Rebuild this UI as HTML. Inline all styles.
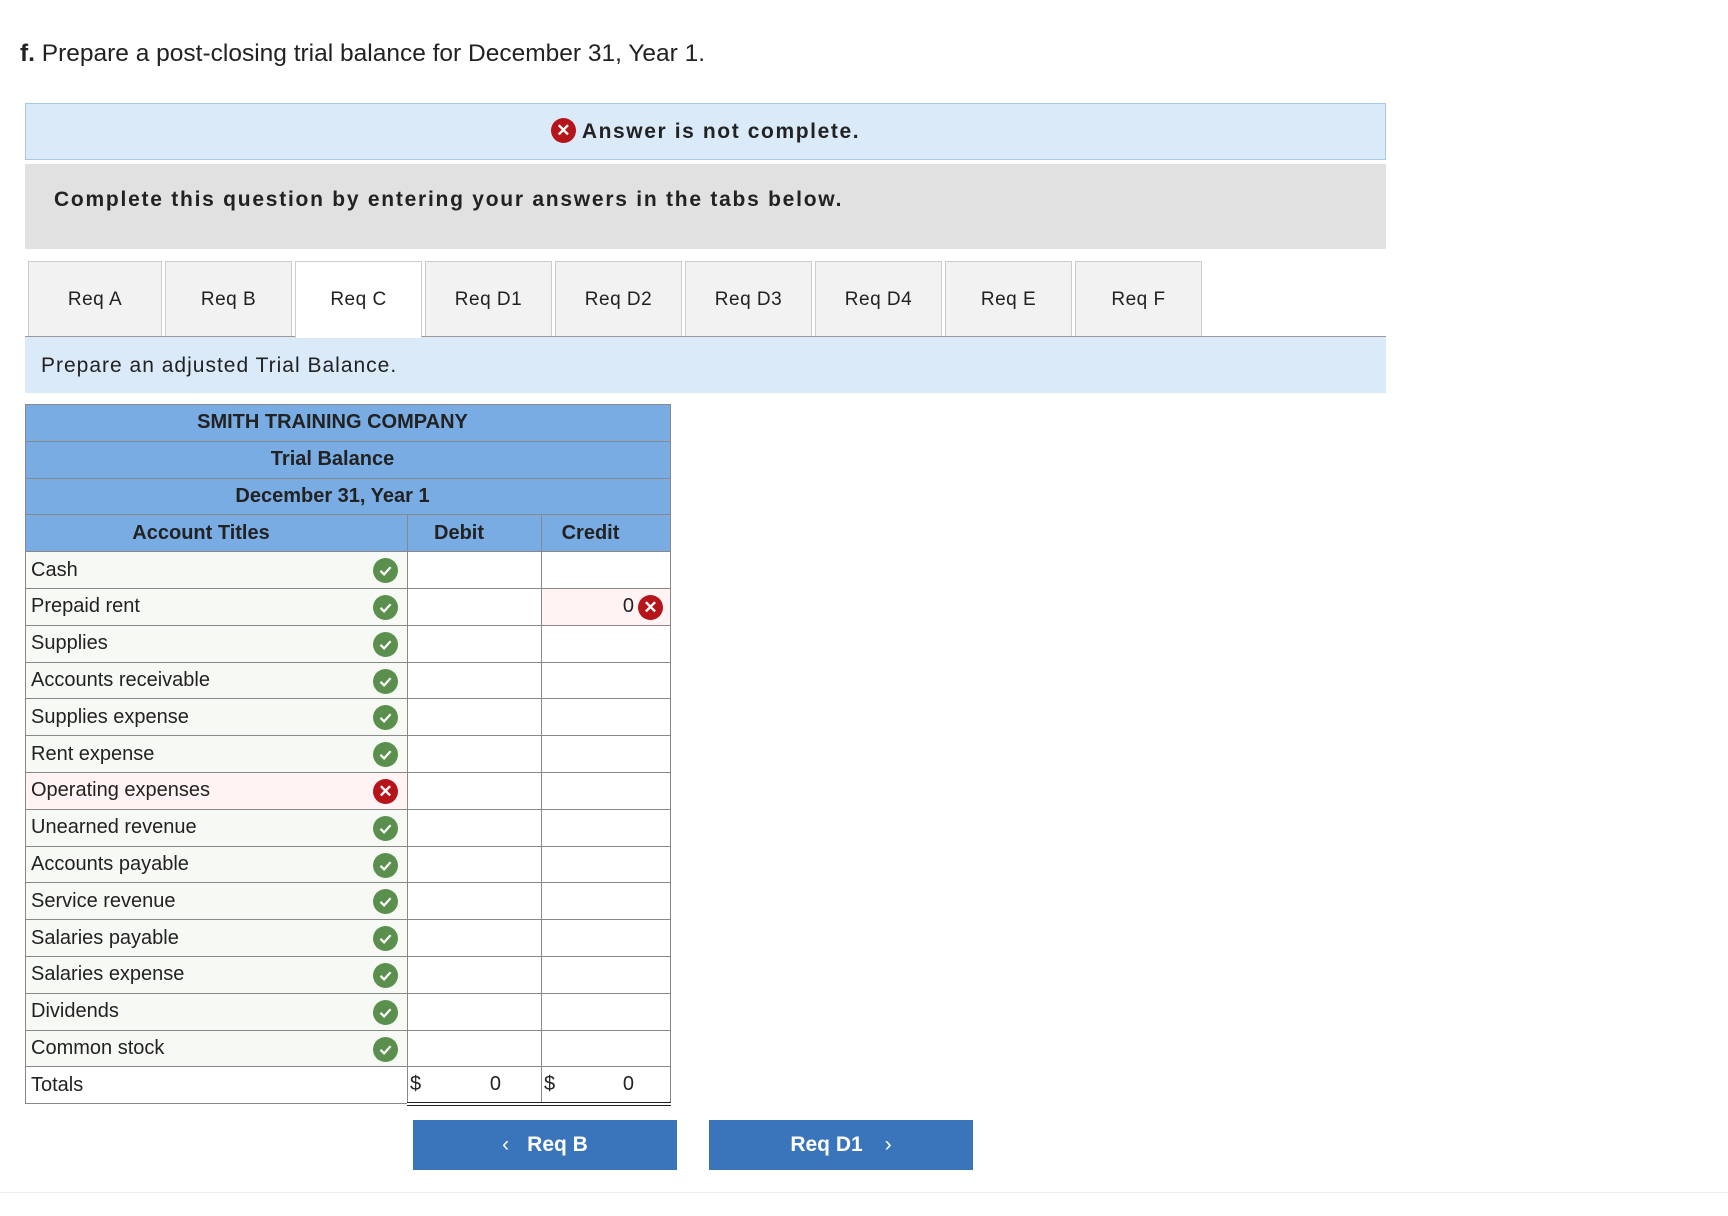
<!DOCTYPE html>
<html><head><meta charset="utf-8"><style>
*{box-sizing:border-box;margin:0;padding:0}
body{width:1728px;height:1216px;background:#fff;font-family:"Liberation Sans",Arial,sans-serif;color:#222;position:relative;overflow:hidden}
.abs{position:absolute}
.title{left:20px;top:40px;font-size:24.5px;color:#222}
.banner{left:25px;top:103px;width:1361px;height:57px;background:#dbeaf8;border:1px solid #a9c8e6;text-align:center;font-weight:bold;font-size:21px;line-height:55px;letter-spacing:1.6px}
.xic{display:inline-block;width:25px;height:25px;border-radius:50%;background:#b5141a;color:#fff;font-size:17px;line-height:25px;text-align:center;vertical-align:middle;font-weight:bold;margin-right:6px;position:relative;top:-2px;letter-spacing:0}
.gray{left:25px;top:164px;width:1361px;height:85px;background:#e1e1e1;font-weight:bold;font-size:21px;padding:24px 0 0 29px;letter-spacing:1.75px}
.tab{top:261px;height:76px;width:127px;background:#f2f2f2;border:1px solid #ccc;border-bottom:none;font-size:19px;text-align:center;line-height:76px;letter-spacing:0.5px}
.tab.act{background:#fff;height:77px;z-index:2}
.tline{left:25px;top:336px;width:1361px;height:1px;background:#999}
.instr{left:25px;top:337px;width:1361px;height:56px;background:#dbeaf8;font-size:21px;padding:17px 0 0 16px;letter-spacing:1px}
table{position:absolute;left:25px;top:404px;border-collapse:collapse;width:646px;font-size:20px}
td{border:1px solid #888;height:36.8px;padding:0 5px}
.h td{background:#78ace3;font-weight:bold;text-align:center;color:#222;padding-right:36px}
.r td.a{background:#f7f9f5;position:relative}
.r td.bad{background:#fff3f3}
.ok,.no{position:absolute;right:9px;top:6px;width:25px;height:25px;border-radius:50%}
.ok{background:#5a8f4e}
.no{background:#b5141a;color:#fff;font-weight:bold;font-size:17px;line-height:25px;text-align:center}
.btn{top:1120px;height:50px;width:264px;background:#3a75bb;color:#fff;font-weight:bold;font-size:21px;text-align:center;line-height:50px}
.bot{left:0;top:1192px;width:1728px;height:1px;background:#eee}
</style></head><body>
<div class="abs title"><b>f.</b> Prepare a post-closing trial balance for December 31, Year 1.</div>
<div class="abs banner"><span class="xic">✕</span>Answer is not complete.</div>
<div class="abs gray">Complete this question by entering your answers in the tabs below.</div>
<div class="abs tab" style="left:28px;width:134px">Req A</div>
<div class="abs tab" style="left:165px">Req B</div>
<div class="abs tab act" style="left:295px">Req C</div>
<div class="abs tab" style="left:425px">Req D1</div>
<div class="abs tab" style="left:555px">Req D2</div>
<div class="abs tab" style="left:685px">Req D3</div>
<div class="abs tab" style="left:815px">Req D4</div>
<div class="abs tab" style="left:945px">Req E</div>
<div class="abs tab" style="left:1075px">Req F</div>
<div class="abs tline"></div>
<div class="abs instr">Prepare an adjusted Trial Balance.</div>
<table>
<tr class="h"><td colspan="3">SMITH TRAINING COMPANY</td></tr>
<tr class="h"><td colspan="3">Trial Balance</td></tr>
<tr class="h"><td colspan="3">December 31, Year 1</td></tr>
<tr class="h"><td style="width:382px">Account Titles</td><td style="width:134px">Debit</td><td>Credit</td></tr>
<tr class="r"><td class="a">Cash<span class="ok"><svg width="25" height="25"><path d="M7.5 12.8l3.6 3.6 6.5-7.2" stroke="#fff" stroke-width="2.2" fill="none"/></svg></span></td><td></td><td></td></tr>
<tr class="r"><td class="a">Prepaid rent<span class="ok"><svg width="25" height="25"><path d="M7.5 12.8l3.6 3.6 6.5-7.2" stroke="#fff" stroke-width="2.2" fill="none"/></svg></span></td><td></td><td class="bad" style="text-align:right;padding-right:36px;position:relative">0<span class="no" style="right:7px">✕</span></td></tr>
<tr class="r"><td class="a">Supplies<span class="ok"><svg width="25" height="25"><path d="M7.5 12.8l3.6 3.6 6.5-7.2" stroke="#fff" stroke-width="2.2" fill="none"/></svg></span></td><td></td><td></td></tr>
<tr class="r"><td class="a">Accounts receivable<span class="ok"><svg width="25" height="25"><path d="M7.5 12.8l3.6 3.6 6.5-7.2" stroke="#fff" stroke-width="2.2" fill="none"/></svg></span></td><td></td><td></td></tr>
<tr class="r"><td class="a">Supplies expense<span class="ok"><svg width="25" height="25"><path d="M7.5 12.8l3.6 3.6 6.5-7.2" stroke="#fff" stroke-width="2.2" fill="none"/></svg></span></td><td></td><td></td></tr>
<tr class="r"><td class="a">Rent expense<span class="ok"><svg width="25" height="25"><path d="M7.5 12.8l3.6 3.6 6.5-7.2" stroke="#fff" stroke-width="2.2" fill="none"/></svg></span></td><td></td><td></td></tr>
<tr class="r"><td class="a" style="background:#fff3f3">Operating expenses<span class="no">✕</span></td><td></td><td></td></tr>
<tr class="r"><td class="a">Unearned revenue<span class="ok"><svg width="25" height="25"><path d="M7.5 12.8l3.6 3.6 6.5-7.2" stroke="#fff" stroke-width="2.2" fill="none"/></svg></span></td><td></td><td></td></tr>
<tr class="r"><td class="a">Accounts payable<span class="ok"><svg width="25" height="25"><path d="M7.5 12.8l3.6 3.6 6.5-7.2" stroke="#fff" stroke-width="2.2" fill="none"/></svg></span></td><td></td><td></td></tr>
<tr class="r"><td class="a">Service revenue<span class="ok"><svg width="25" height="25"><path d="M7.5 12.8l3.6 3.6 6.5-7.2" stroke="#fff" stroke-width="2.2" fill="none"/></svg></span></td><td></td><td></td></tr>
<tr class="r"><td class="a">Salaries payable<span class="ok"><svg width="25" height="25"><path d="M7.5 12.8l3.6 3.6 6.5-7.2" stroke="#fff" stroke-width="2.2" fill="none"/></svg></span></td><td></td><td></td></tr>
<tr class="r"><td class="a">Salaries expense<span class="ok"><svg width="25" height="25"><path d="M7.5 12.8l3.6 3.6 6.5-7.2" stroke="#fff" stroke-width="2.2" fill="none"/></svg></span></td><td></td><td></td></tr>
<tr class="r"><td class="a">Dividends<span class="ok"><svg width="25" height="25"><path d="M7.5 12.8l3.6 3.6 6.5-7.2" stroke="#fff" stroke-width="2.2" fill="none"/></svg></span></td><td></td><td></td></tr>
<tr class="r"><td class="a">Common stock<span class="ok"><svg width="25" height="25"><path d="M7.5 12.8l3.6 3.6 6.5-7.2" stroke="#fff" stroke-width="2.2" fill="none"/></svg></span></td><td></td><td></td></tr>
<tr><td>Totals</td><td style="border-bottom:4px double #222;padding:0 40px 0 2px"><span style="float:left">$</span><span style="float:right">0</span></td><td style="border-bottom:4px double #222;padding:0 36px 0 2px"><span style="float:left">$</span><span style="float:right">0</span></td></tr>
</table>
<div class="abs btn" style="left:413px"><span style="font-weight:normal;margin-right:18px">&lsaquo;</span>Req B</div>
<div class="abs btn" style="left:709px">Req D1<span style="font-weight:normal;margin-left:22px">&rsaquo;</span></div>
<div class="abs bot"></div>
</body></html>
